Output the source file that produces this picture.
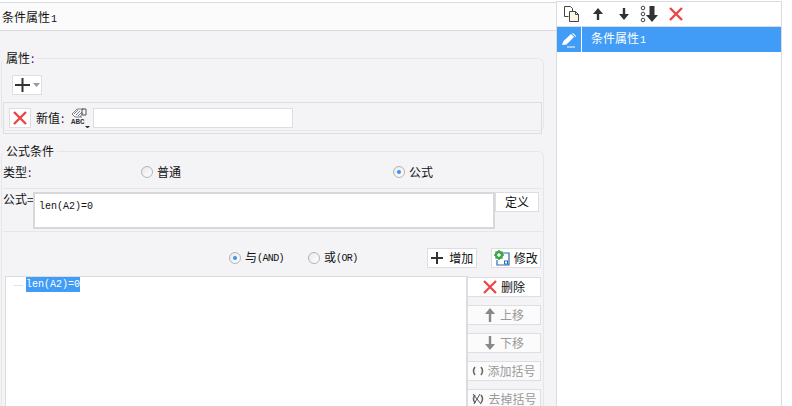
<template>
  <div class="page">
    <section class="left">
      <header class="title">条件属性<span class="m one">1</span></header>

      <fieldset class="group g1">
        <legend>属性<span class="colon">:</span></legend>
        <button class="plain plus-btn">
          <svg width="18" height="18" viewBox="0 0 18 18"><path d="M1 9h15M8.500 2v14" stroke="#333" stroke-width="2"/></svg>
          <svg width="7" height="4" viewBox="0 0 7 4"><path d="M0 0h7L3.500 4z" fill="#999"/></svg>
        </button>
        <div class="value-row">
          <button class="plain x-btn">
            <svg width="16" height="16" viewBox="0 0 16 16"><path d="M2 2l12 12M14 2L2 14" stroke="#ee4444" stroke-width="2.400"/></svg>
          </button>
          <span class="value-label">新值<span class="colon">:</span></span>
          <svg class="abc" width="20" height="20" viewBox="0 0 20 20">
            <path d="M2 6l5-5h7M2 6l3 3h7M4 6l4-4M6 7l4-4M8 8l4-4M10 9l3-4" stroke="#666" stroke-width=".8" fill="none"/>
            <path d="M12 1h4v6h-4z" stroke="#555" fill="none"/>
            <text x="1" y="16" class="abc-text">ABC</text>
            <path d="M15 18h5l-2.500 2.500z" fill="#333"/>
          </svg>
          <input class="value-input" />
        </div>
      </fieldset>

      <fieldset class="group g2">
        <legend>公式条件</legend>
        <div class="type-row">
          <span class="type-label">类型<span class="colon">:</span></span>
          <label class="radio r-normal"><i class="dot"></i>普通</label>
          <label class="radio r-formula"><i class="dot on"></i>公式</label>
        </div>
        <div class="formula-row">
          <span class="formula-label">公式=</span>
          <div class="formula-box m">len(A2)=0</div>
          <button class="plain def-btn">定义</button>
        </div>
        <div class="logic-row">
          <label class="radio r-and"><i class="dot on"></i><span>与<span class="m tiny">(AND)</span></span></label>
          <label class="radio r-or"><i class="dot"></i><span>或<span class="m tiny">(OR)</span></span></label>
          <button class="plain act add">
            <svg width="14" height="14" viewBox="0 0 14 14"><path d="M1 7h12M7 1v12" stroke="#333" stroke-width="2"/></svg>
            增加
          </button>
          <button class="plain act edit">
            <svg width="16" height="16" viewBox="0 0 16 16">
              <path d="M6 3h9v12H3V10" fill="none" stroke="#2b6cb0" stroke-width="1.200"/>
              <circle cx="5" cy="5" r="3" fill="none" stroke="#3aa648" stroke-width="2.400"/>
              <path d="M5 0v2M5 8v2M0 5h2M8 5h2M1.500 1.500l1.500 1.500M8.500 8.500L7 7M1.500 8.500L3 7M8.500 1.500L7 3" stroke="#3aa648" stroke-width="1.400"/>
              <rect x="10.500" y="11" width="3" height="3" fill="none" stroke="#2b6cb0"/>
            </svg>
            修改
          </button>
        </div>
        <div class="bottom">
          <div class="tree">
            <span class="branch"></span><span class="node m">len(A2)=0</span>
          </div>
          <div class="side">
            <button class="plain side-btn">
              <svg width="14" height="14" viewBox="0 0 14 14"><path d="M1 1l12 12M13 1L1 13" stroke="#ee4444" stroke-width="2.200"/></svg>
              删除
            </button>
            <button class="plain side-btn off">
              <svg width="12" height="14" viewBox="0 0 12 14"><path d="M6 0l5 6H7.200v8H4.800V6H1z" fill="#888"/></svg>
              上移
            </button>
            <button class="plain side-btn off">
              <svg width="12" height="14" viewBox="0 0 12 14"><path d="M6 14l5-6H7.200V0H4.800v8H1z" fill="#888"/></svg>
              下移
            </button>
            <button class="plain side-btn off tight">
              <svg width="12" height="10" viewBox="0 0 12 10"><path d="M3 1Q0 5 3 9M9 1q3 4 0 8" fill="none" stroke="#666" stroke-width="1.500"/></svg>
              添加括号
            </button>
            <button class="plain side-btn off tight">
              <svg width="14" height="14" viewBox="0 0 14 14"><path d="M4 3Q1 7 4 11M10 3q3 4 0 8" fill="none" stroke="#666" stroke-width="1.500"/><path d="M2 2l8 10M9 2L3 12" stroke="#555"/></svg>
              去掉括号
            </button>
          </div>
        </div>
      </fieldset>
    </section>

    <aside class="right">
      <div class="tools">
        <svg class="t-copy" width="18" height="18" viewBox="0 0 18 18"><path d="M1.500 1.500h6l2 2v3M1.500 1.500v10h4" fill="#fff" stroke="#444"/><path d="M6.500 6.500h6l3 3v7h-9z" fill="#fdf6e3" stroke="#444"/><path d="M12.500 6.500v3h3" fill="none" stroke="#444"/></svg>
        <svg class="t-up" width="14" height="14" viewBox="0 0 14 14"><path d="M7 1l5 6H8.200v6H5.800V7H2z" fill="#333"/></svg>
        <svg class="t-down" width="14" height="14" viewBox="0 0 14 14"><path d="M7 13l5-6H8.200V1H5.800v6H2z" fill="#333"/></svg>
        <svg class="t-list" width="20" height="18" viewBox="0 0 20 18"><circle cx="3" cy="3" r="1.800" fill="none" stroke="#444"/><circle cx="3" cy="9" r="1.800" fill="none" stroke="#444"/><circle cx="3" cy="15" r="1.800" fill="none" stroke="#444"/><path d="M12 17l6-7h-3.500V1h-5v9H6z" fill="#333"/></svg>
        <svg class="t-x" width="16" height="16" viewBox="0 0 16 16"><path d="M2 2l12 12M14 2L2 14" stroke="#ee4444" stroke-width="2.400"/></svg>
      </div>
      <div class="row">
        <span class="pen">
          <svg width="16" height="16" viewBox="0 0 16 16"><path d="M1 13l1.500-4L10 2l3 3-7.500 7.500z" fill="#fff"/><path d="M11 1.500l1-.5 3 3-.5 1z" fill="#fff"/><path d="M6 15h8" stroke="#fff"/></svg>
        </span>
        <span class="row-text">条件属性<span class="m one">1</span></span>
      </div>
    </aside>
  </div>
</template>

<style>
body { margin: 0; background: #fff; }
</style>

<style scoped>
.page {
  display: flex;
  width: 792px;
  height: 406px;
  overflow: hidden;
  background: #fff;
  font: 12px/14px "Noto Sans CJK SC", "Liberation Sans", sans-serif;
  color: #111;
}
.m { font-family: "Liberation Mono", monospace; font-size: 10px; }
.tiny { letter-spacing: -0.6px; vertical-align: 1px; }
.one { margin-left: 1px; }
.colon { color: #606; margin-left: 1px; }
.left {
  width: 556px;
  flex: none;
  background: #f4f4f6;
  margin-top: 2px;
  border-top: 1px solid #dcdce0;
  overflow: hidden;
}
.title {
  height: 27px;
  line-height: 28px;
  padding-left: 2px;
  background: #fbfbfc;
  border-bottom: 1px solid #dcdce0;
  font-size: 12px;
}
.group {
  margin: 0 12px 0 1px;
  padding: 0;
  border: 1px solid #e6e6ea;
  border-radius: 6px;
  min-width: 0;
}
.group legend { padding: 0 3px 0 3px; margin-left: 1px; height: 14px; line-height: 14px; }
.g1 { margin-top: 20px; height: 78px; }
.g2 { margin-top: 13px; height: 300px; }
.plain {
  display: flex;
  align-items: center;
  justify-content: center;
  padding: 0;
  background: #fff;
  border: 1px solid #dedee2;
  font: inherit;
  color: #111;
  box-sizing: border-box;
  white-space: nowrap;
}
.plus-btn { width: 30px; height: 20px; margin: 10px 0 0 10px; gap: 1px; }
.value-row {
  display: flex;
  align-items: center;
  height: 30px;
  margin: 7px 1px 0 1px;
  border: 1px solid #dedee2;
}
.x-btn { width: 22px; height: 20px; margin-left: 5px; }
.value-label { margin-left: 5px; width: 34px; }
.abc { flex: none; }
.abc-text { font: 700 7.500px "Liberation Mono", monospace; fill: #333; }
.value-input {
  width: 200px;
  height: 20px;
  margin-left: 3px;
  padding: 0;
  background: #fff;
  border: 1px solid #dedee2;
  box-sizing: border-box;
}
.type-row {
  display: flex;
  align-items: center;
  height: 31px;
  margin-left: 1px;
  border-bottom: 1px solid #e6e6ea;
  box-sizing: border-box;
  padding-top: 3px;
  padding-bottom: 5px;
}
.type-label { width: 34px; }
.radio { display: flex; align-items: center; gap: 4px; }
.r-normal { margin-left: 104px; }
.r-formula { margin-left: 212px; }
.dot {
  width: 12px;
  height: 12px;
  box-sizing: border-box;
  flex: none;
  border: 1px solid #b4b4b8;
  border-radius: 50%;
  background: linear-gradient(135deg, #e8e8ea, #fff);
  display: block;
  position: relative;
}
.dot.on::after {
  content: "";
  position: absolute;
  left: 3px;
  top: 3px;
  width: 4px;
  height: 4px;
  border-radius: 50%;
  background: #3f8ef5;
}
.formula-row {
  display: flex;
  align-items: flex-start;
  height: 43px;
  margin-left: 1px;
  padding-top: 3px;
  border-bottom: 1px solid #e6e6ea;
  box-sizing: border-box;
}
.formula-label { width: 30px; flex: none; white-space: nowrap; }
.formula-box {
  width: 454px;
  height: 26px;
  flex: none;
  background: #fff;
  border: 2px solid #d8d8dc;
  padding: 7px 0 0 4px;
  line-height: 12px;
}
.def-btn { width: 44px; height: 20px; }
.logic-row {
  display: flex;
  align-items: center;
  height: 44px;
  padding-top: 8px;
  box-sizing: border-box;
}
.r-and { margin-left: 227px; }
.r-or { margin-left: 24px; }
.act { width: 50px; height: 20px; gap: 5px; }
.add { margin-left: 69px; }
.edit { margin-left: 14px; gap: 4px; }
.bottom { display: flex; align-items: flex-start; margin-left: 3px; }
.tree {
  width: 460px;
  height: 140px;
  flex: none;
  background: #fff;
  border-top: 1px solid #dcdce0;
  border-left: 1px solid #dcdce0;
  border-right: 2px solid #dcdce0;
  display: flex;
  align-items: flex-start;
}
.branch { width: 10px; height: 1px; margin: 8px 3px 0 7px; background: #e4e4e4; flex: none; }
.node {
  background: #409cf7;
  color: #fff;
  line-height: 15px;
  height: 15px;
}
.side { display: flex; flex-direction: column; gap: 8px; margin-left: -1px; padding-top: 1px; }
.side-btn { width: 74px; height: 20px; gap: 4px; flex: none; }
.off { color: #999; background: #fbfbfc; }
.tight { gap: 3px; }
.right {
  width: 226px;
  height: 405px;
  margin-top: 1px;
  flex: none;
  box-sizing: border-box;
  border: 1px solid #dcdce0;
  border-bottom: 0;
  background: #fff;
}
.tools {
  display: flex;
  align-items: center;
  height: 24px;
  padding-left: 6px;
  border-bottom: 1px solid #dcdce0;
}
.t-up { margin-left: 10px; }
.t-down { margin-left: 12px; }
.t-list { margin-left: 9px; }
.t-x { margin-left: 8px; }
.row {
  display: flex;
  align-items: center;
  height: 25px;
  background: #409cf7;
  color: #fff;
}
.pen {
  width: 25px;
  height: 25px;
  display: flex;
  align-items: center;
  justify-content: center;
  border-right: 1px solid #fff;
  flex: none;
  box-sizing: border-box;
}
.row-text { margin-left: 9px; }
</style>
